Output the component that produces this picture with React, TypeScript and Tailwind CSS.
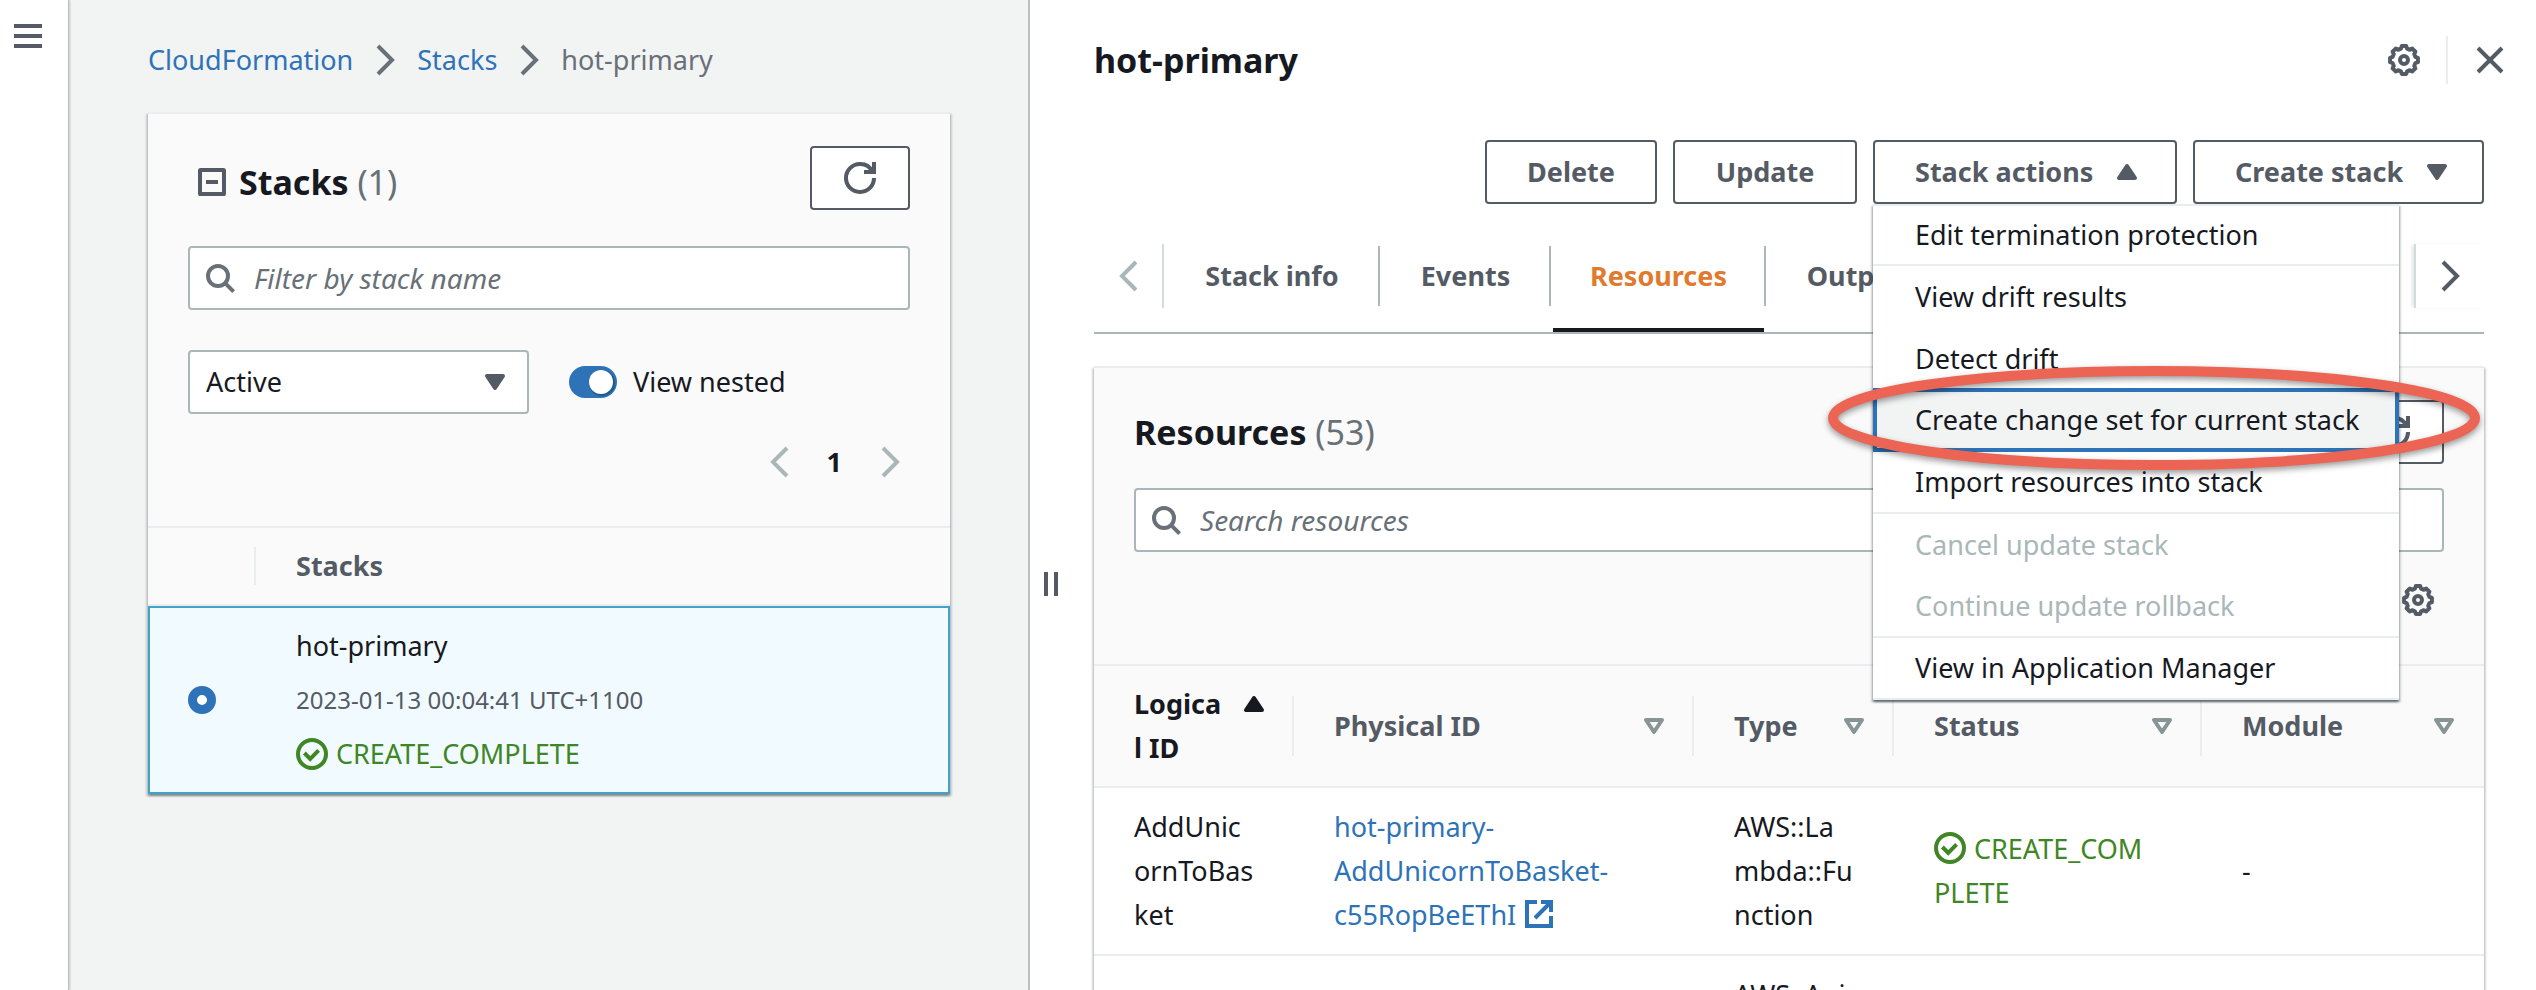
import type { ReactNode } from "react";

/* ---------- Icons (16-unit grid, drawn at 32px) ---------- */

function Icon({ children, className = "" }: { children: ReactNode; className?: string }) {
  return (
    <svg
      viewBox="0 0 16 16"
      className={`size-8 shrink-0 ${className}`}
      fill="none"
      stroke="currentColor"
      strokeWidth="2"
      aria-hidden="true"
    >
      {children}
    </svg>
  );
}

const AngleRight = ({ className = "" }: { className?: string }) => (
  <Icon className={className}>
    <path d="m4.5 1 7 7-7 7" />
  </Icon>
);

const AngleLeft = ({ className = "" }: { className?: string }) => (
  <Icon className={className}>
    <path d="m12 1-7 7 7 7" />
  </Icon>
);

const Refresh = () => (
  <Icon>
    <path d="M10 5h5V0" />
    <path d="M15 8a6.96 6.96 0 0 1-7 7 6.96 6.96 0 0 1-7-7 6.96 6.96 0 0 1 7-7 6.87 6.87 0 0 1 6.3 4" />
  </Icon>
);

const Search = () => (
  <Icon>
    <circle cx="7" cy="7" r="5" />
    <path d="m10.8 10.8 4 4" />
  </Icon>
);

const CaretDown = ({ className = "" }: { className?: string }) => (
  <Icon className={className}>
    <path d="M4 5h8l-4 6z" fill="currentColor" strokeLinejoin="round" />
  </Icon>
);

const CaretUp = ({ className = "" }: { className?: string }) => (
  <Icon className={className}>
    <path d="M4 11h8L8 5z" fill="currentColor" strokeLinejoin="round" />
  </Icon>
);

const CaretDownOutline = ({ className = "" }: { className?: string }) => (
  <Icon className={className}>
    <path d="M4 5h8l-4 6z" strokeLinejoin="round" />
  </Icon>
);

const CheckCircle = ({ className = "" }: { className?: string }) => (
  <Icon className={className}>
    <circle cx="8" cy="8" r="7" />
    <path d="m4.2 7.5 2.9 2.9 4.2-4.2" />
  </Icon>
);

const External = ({ className = "" }: { className?: string }) => (
  <Icon className={className}>
    <path d="M7 2H2v12h12V9" />
    <path d="M9 2h5v5M14 2l-8 8" />
  </Icon>
);

const Close = () => (
  <Icon>
    <path d="m2 2 12 12M14 2 2 14" />
  </Icon>
);

const gearOutline = (() => {
  const at = (deg: number, r: number) => {
    const a = (deg * Math.PI) / 180;
    return `${(8 + r * Math.sin(a)).toFixed(2)} ${(8 - r * Math.cos(a)).toFixed(2)}`;
  };
  const points: string[] = [];
  for (let tooth = 0; tooth < 8; tooth++) {
    const c = tooth * 45;
    points.push(at(c - 9, 7.05), at(c + 9, 7.05), at(c + 15, 5.9), at(c + 30, 5.9));
  }
  return `M${points.join("L")}Z`;
})();

const Gear = () => (
  <Icon>
    <path d={gearOutline} strokeLinejoin="round" />
    <circle cx="8" cy="8" r="2" />
  </Icon>
);

/* ---------- Shared pieces ---------- */

const buttonBase =
  "flex h-16 items-center rounded-sm border-2 border-[#545b64] bg-white font-bold text-[#545b64]";
const card =
  "border-t-2 border-[#eaeded] bg-[#fafafa] shadow-[0_2px_2px_0_rgba(0,28,36,0.3),2px_2px_2px_0_rgba(0,28,36,0.15),-2px_2px_2px_0_rgba(0,28,36,0.15)]";

function SearchBox({ label }: { label: string }) {
  return (
    <label className="flex h-16 items-center gap-[18px] rounded-sm border-2 border-[#aab7b8] bg-white px-3.5 text-[#687078]">
      <Search />
      <input
        type="text"
        aria-label={label}
        placeholder={label}
        className="min-w-0 flex-1 bg-transparent text-[28px] outline-none placeholder:italic placeholder:text-[#687078]"
      />
    </label>
  );
}

/* ---------- Left pane ---------- */

function StackList() {
  return (
    <section className={`mt-[30px] ${card}`}>
      <div className="px-10 pt-8">
        <div className="flex items-center justify-between">
          <h2 className="flex items-center gap-[11px] pt-2 pl-2 text-[34px] font-bold">
            <Icon className="text-[#545b64]">
              <rect x="2" y="2" width="12" height="12" rx="0.3" />
              <path d="M5 8h6" />
            </Icon>
            <span>
              Stacks <span className="font-normal text-[#687078]">(1)</span>
            </span>
          </h2>
          <button
            type="button"
            aria-label="Refresh stacks"
            className={`${buttonBase} w-[100px] justify-center`}
          >
            <Refresh />
          </button>
        </div>
        <div className="mt-9">
          <SearchBox label="Filter by stack name" />
        </div>
        <div className="mt-10 flex items-center gap-10">
          <div className="relative w-[341px]">
            <select
              aria-label="Stack status"
              className="h-16 w-full appearance-none rounded-sm border-2 border-[#aab7b8] bg-white px-4"
            >
              <option>Active</option>
            </select>
            <CaretDown className="pointer-events-none absolute top-4 right-[18px] text-[#545b64]" />
          </div>
          <label className="flex items-center gap-4">
            <input
              type="checkbox"
              defaultChecked
              className="relative h-8 w-12 appearance-none rounded-full bg-[#2e73b8] after:absolute after:top-1 after:right-1 after:size-6 after:rounded-full after:bg-white after:shadow-[1px_1px_1px_1px_rgba(0,28,36,0.3)]"
            />
            View nested
          </label>
        </div>
        <nav
          aria-label="Pagination"
          className="mt-[26px] flex h-11 items-center justify-end gap-8 pr-1 text-[#aab7b8]"
        >
          <button type="button" aria-label="Previous page">
            <AngleLeft />
          </button>
          <button type="button" className="font-bold text-[#16191f]">
            1
          </button>
          <button type="button" aria-label="Next page">
            <AngleRight />
          </button>
        </nav>
      </div>
      <table className="mt-[42px] w-full table-fixed border-separate border-spacing-0">
        <colgroup>
          <col className="w-[108px]" />
          <col />
        </colgroup>
        <thead>
          <tr>
            <th className="h-20 border-y-2 border-[#eaeded] p-0">
              <div className="ml-auto h-[38px] border-r-2 border-[#eaeded]" />
            </th>
            <th className="border-y-2 border-[#eaeded] p-0 pl-10 text-left font-bold text-[#545b64]">Stacks</th>
          </tr>
        </thead>
        <tbody>
          <tr className="bg-[#f1fafe]">
            <td className="border-y-2 border-l-2 border-[#44a1c8] p-0">
              <input
                type="radio"
                name="stack"
                defaultChecked
                aria-label="hot-primary"
                className="ml-[38px] block size-7 appearance-none rounded-full border-9 border-[#2e73b8] bg-white"
              />
            </td>
            <td className="border-y-2 border-r-2 border-[#44a1c8] py-4 pl-10">
              <div className="flex flex-col gap-2.5">
                <div>hot-primary</div>
                <div className="text-[24px] leading-[44px] text-[#545b64]">2023-01-13 00:04:41 UTC+1100</div>
                <div className="flex items-center gap-2 text-[#3f8624]">
                  <CheckCircle />
                  CREATE_COMPLETE
                </div>
              </div>
            </td>
          </tr>
        </tbody>
      </table>
    </section>
  );
}

/* ---------- Right pane ---------- */

type MenuEntry = { label: string; height: string; disabled?: boolean; divider?: boolean; current?: boolean };

const stackActions: MenuEntry[] = [
  { label: "Edit termination protection", height: "h-[58px]", divider: true },
  { label: "View drift results", height: "h-[62px]" },
  { label: "Detect drift", height: "h-[62px]" },
  { label: "Create change set for current stack", height: "h-[64px]", current: true },
  { label: "Import resources into stack", height: "h-[60px]", divider: true },
  { label: "Cancel update stack", height: "h-[62px]", disabled: true },
  { label: "Continue update rollback", height: "h-[60px]", disabled: true, divider: true },
  { label: "View in Application Manager", height: "h-[60px]" },
];

function Highlight() {
  return (
    <svg
      viewBox="0 0 652 104"
      className="pointer-events-none absolute -top-[22px] -left-[45px] h-[104px] w-[652px] max-w-none overflow-visible drop-shadow-[0_3px_3px_rgba(0,0,0,0.4)]"
      aria-hidden="true"
    >
      <ellipse cx="326" cy="52" rx="321" ry="47" fill="none" stroke="#ec6453" strokeWidth="10" />
    </svg>
  );
}

function ActionsMenu() {
  return (
    <ul className="absolute top-full left-0 z-20 w-[526px] border-y-2 border-[#eaeded] bg-white whitespace-nowrap shadow-[0_2px_2px_0_rgba(0,28,36,0.5),2px_2px_2px_0_rgba(0,28,36,0.15),-2px_2px_2px_0_rgba(0,28,36,0.15)]">
      {stackActions.map((a) => (
        <li
          key={a.label}
          className={`relative ${a.current ? "z-10 -mt-0.5" : ""} ${a.divider ? "border-b-2 border-[#eaeded]" : ""}`}
        >
          <button
            type="button"
            disabled={a.disabled}
            className={`flex w-full items-center ${a.height} ${
              a.current ? "border-4 border-[#2e73b8] bg-[#f2f3f3] px-[38px]" : "px-[42px]"
            } ${a.disabled ? "text-[#aab7b8]" : ""}`}
          >
            {a.label}
          </button>
          {a.current && <Highlight />}
        </li>
      ))}
    </ul>
  );
}

const tabs = [
  { label: "Stack info", width: "w-[216px]" },
  { label: "Events", width: "w-[171px]" },
  { label: "Resources", width: "w-[215px]", active: true },
  { label: "Outputs", width: "w-[192px]" },
  { label: "Parameters", width: "w-[236px]" },
];

function Tabs() {
  return (
    <div className="mt-10 flex border-b-2 border-[#aab7b8] pb-6">
      <button
        type="button"
        aria-label="Scroll tabs left"
        className="flex h-16 w-[70px] shrink-0 items-center justify-end border-r-2 border-[#d5dbdb] pr-[18px] text-[#aab7b8]"
      >
        <AngleLeft />
      </button>
      <div className="flex min-w-0 flex-1 pt-0.5">
        {tabs.map((t) => (
          <button
            key={t.label}
            type="button"
            className={`relative flex h-[60px] shrink-0 items-center justify-center border-r-2 border-[#aab7b8] pl-0.5 font-bold ${t.width} ${
              t.active
                ? "text-[#df7a2e] after:absolute after:right-0 after:-bottom-[26px] after:left-0.5 after:h-1 after:bg-[#16191f]"
                : "text-[#545b64]"
            }`}
          >
            {t.label}
          </button>
        ))}
      </div>
      <button
        type="button"
        aria-label="Scroll tabs right"
        className="flex h-16 w-[70px] shrink-0 items-center border-l-2 border-[#d5dbdb] pl-[18px] text-[#545b64] shadow-[-3px_0_3px_-1px_rgba(0,28,36,0.12)]"
      >
        <AngleRight />
      </button>
    </div>
  );
}

const columns = [
  { label: "Logical ID", width: "w-[200px]", sorted: true },
  { label: "Physical ID", width: "w-[400px]" },
  { label: "Type", width: "w-[200px]" },
  { label: "Status", width: "w-[308px]" },
  { label: "Module", width: "" },
];

function ResourcesCard() {
  const cell = "border-b-2 border-[#eaeded] py-[17px] pl-10 break-all";
  return (
    <section className={`mt-8 ${card}`}>
      <div className="px-10 pt-8">
        <div className="flex items-center justify-between">
          <h2 className="text-[34px] font-bold">
            Resources <span className="font-normal text-[#687078]">(53)</span>
          </h2>
          <button
            type="button"
            aria-label="Refresh resources"
            className={`${buttonBase} w-[100px] justify-center`}
          >
            <Refresh />
          </button>
        </div>
        <div className="mt-6">
          <SearchBox label="Search resources" />
        </div>
        <div className="mt-8 flex justify-end pr-2.5 text-[#545b64]">
          <button type="button" aria-label="Preferences">
            <Gear />
          </button>
        </div>
      </div>
      <table className="mt-12 w-full table-fixed border-separate border-spacing-0">
        <colgroup>
          {columns.map((c) => (
            <col key={c.label} className={c.width} />
          ))}
        </colgroup>
        <thead>
          <tr>
            {columns.map((c, i) => (
              <th key={c.label} className="border-y-2 border-[#eaeded] p-0 text-left">
                <div className="flex h-[120px] items-center pl-10">
                  <div
                    className={`flex flex-1 items-start justify-between ${
                      i < columns.length - 1 ? "pr-[22px]" : "pr-6"
                    } ${c.sorted ? "text-[#16191f]" : "text-[#545b64]"}`}
                  >
                    <span className={c.sorted ? "w-[90px] break-all" : ""}>{c.label}</span>
                    {c.sorted ? (
                      <CaretUp className="mt-1.5" />
                    ) : (
                      <CaretDownOutline className="mt-1.5 text-[#879596]" />
                    )}
                  </div>
                  {i < columns.length - 1 && <div className="h-[60px] w-0.5 bg-[#eaeded]" />}
                </div>
              </th>
            ))}
          </tr>
        </thead>
        <tbody className="bg-white">
          <tr>
            <td className={`${cell} pr-10`}>AddUnicornToBasket</td>
            <td className="border-b-2 border-[#eaeded] px-10 py-[17px]">
              <a href="#resource" className="text-[#2e73b8]">
                hot-primary-AddUnicornToBasket-c55RopBeEThI{" "}
                <External className="inline-block align-[-5px]" />
              </a>
            </td>
            <td className={`${cell} pr-10`}>AWS::Lambda::Function</td>
            <td className={`${cell} pr-14 text-[#3f8624]`}>
              <CheckCircle className="mr-2 inline-block align-[-5px]" />
              CREATE_COMPLETE
            </td>
            <td className={`${cell} pr-10`}>-</td>
          </tr>
          <tr>
            <td className={cell} />
            <td className={cell} />
            <td className={`${cell} pr-10`}>AWS::ApiGateway::Method</td>
            <td className={cell} />
            <td className={cell} />
          </tr>
        </tbody>
      </table>
    </section>
  );
}

function StackDetail() {
  return (
    <main className="min-w-0 flex-1 pt-9 pr-[52px]">
      <header className="flex h-12 items-center justify-between">
        <h1 className="text-[34px] font-bold">hot-primary</h1>
        <div className="-mr-[22px] flex items-center text-[#545b64]">
          <button type="button" aria-label="Settings">
            <Gear />
          </button>
          <div className="ml-[26px] h-12 w-0.5 bg-[#eaeded]" />
          <button type="button" aria-label="Close panel" className="ml-[26px]">
            <Close />
          </button>
        </div>
      </header>
      <div className="mt-14 flex justify-end gap-4">
        <button type="button" className={`${buttonBase} w-[172px] justify-center`}>
          Delete
        </button>
        <button type="button" className={`${buttonBase} w-[184px] justify-center`}>
          Update
        </button>
        <div className="relative">
          <button type="button" aria-expanded="true" className={`${buttonBase} w-[304px] gap-[18px] pl-10`}>
            Stack actions
            <CaretUp />
          </button>
          <ActionsMenu />
        </div>
        <button type="button" aria-expanded="false" className={`${buttonBase} w-[291px] gap-[18px] pl-10`}>
          Create stack
          <CaretDown />
        </button>
      </div>
      <Tabs />
      <ResourcesCard />
    </main>
  );
}

/* ---------- Page ---------- */

export default function App() {
  return (
    <div className="flex h-screen overflow-hidden bg-white font-['Noto_Sans',sans-serif] text-[27px] leading-[44px] text-[#16191f]">
      <aside className="z-10 w-[69px] shrink-0 border-r border-[#b9bec1] pt-6 pl-3.5 shadow-[1px_0_2px_0_rgba(0,28,36,0.2)]">
        <button type="button" aria-label="Open navigation" className="block text-[#545b64]">
          <svg viewBox="0 0 28 24" className="h-6 w-7" fill="currentColor" aria-hidden="true">
            <path d="M0 0h28v4H0zM0 10h28v4H0zM0 20h28v4H0z" />
          </svg>
        </button>
      </aside>

      <div className="w-[961px] shrink-0 border-r-2 border-[#b9c1c3] bg-[#f2f3f3] pt-[38px] pr-[78px] pl-[79px]">
        <nav aria-label="Breadcrumb" className="flex items-center gap-4 text-[#2e73b8]">
          <a href="#cloudformation">CloudFormation</a>
          <AngleRight className="text-[#687078]" />
          <a href="#stacks">Stacks</a>
          <AngleRight className="text-[#687078]" />
          <span className="text-[#687078]">hot-primary</span>
        </nav>
        <StackList />
      </div>

      <div className="flex w-16 shrink-0 items-center pt-[178px] pl-3.5">
        <button
          type="button"
          aria-label="Resize panels"
          className="h-6 w-3.5 border-x-4 border-[#545b64]"
        />
      </div>

      <StackDetail />
    </div>
  );
}
